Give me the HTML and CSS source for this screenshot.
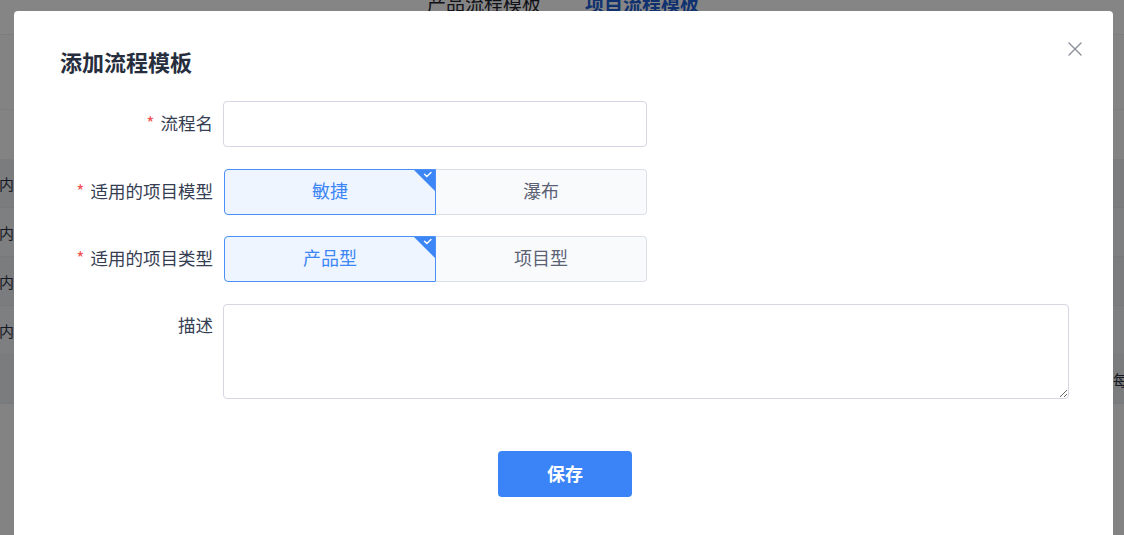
FILE: index.html
```html
<!DOCTYPE html>
<html lang="zh-CN">
<head>
<meta charset="utf-8">
<title>流程模板</title>
<link rel="stylesheet" href="styles.css">
</head>
<body>
  <div class="page">
    <div class="tabs">
      <span class="tab">产品流程模板</span>
      <span class="tab tab-active">项目流程模板</span>
    </div>
    <div class="toolbar"></div>
    <div class="table">
      <div class="row"><span class="cell">内容</span></div>
      <div class="row"><span class="cell">内容</span></div>
      <div class="row"><span class="cell">内容</span></div>
      <div class="row"><span class="cell">内容</span></div>
      <div class="row row-last"><span class="cell cell-right">每</span></div>
    </div>
  </div>

  <div class="mask"></div>

  <div class="dialog">
    <button class="dialog-close" type="button" aria-label="关闭">
      <svg viewBox="0 0 16 16" width="16" height="16"><path d="M2 2 L14 14 M14 2 L2 14" stroke="#8a8f9a" stroke-width="1.4" fill="none" stroke-linecap="round"/></svg>
    </button>
    <h2 class="dialog-title">添加流程模板</h2>

    <form class="form">
      <div class="form-row">
        <label class="form-label"><span class="req">*</span>流程名</label>
        <input class="input" type="text">
      </div>
      <div class="form-row">
        <label class="form-label"><span class="req">*</span>适用的项目模型</label>
        <div class="segmented">
          <span class="seg seg-on">敏捷
            <svg class="seg-mark" viewBox="0 0 23 23" width="23" height="23"><path d="M0 0 H23 V23 Z" fill="#3d86f6"/><path d="M11.5 5.2 L13.8 7.4 L18 3.4" stroke="#fff" stroke-width="1.4" fill="none" stroke-linecap="round" stroke-linejoin="round"/></svg>
          </span>
          <span class="seg">瀑布</span>
        </div>
      </div>
      <div class="form-row">
        <label class="form-label"><span class="req">*</span>适用的项目类型</label>
        <div class="segmented">
          <span class="seg seg-on">产品型
            <svg class="seg-mark" viewBox="0 0 23 23" width="23" height="23"><path d="M0 0 H23 V23 Z" fill="#3d86f6"/><path d="M11.5 5.2 L13.8 7.4 L18 3.4" stroke="#fff" stroke-width="1.4" fill="none" stroke-linecap="round" stroke-linejoin="round"/></svg>
          </span>
          <span class="seg">项目型</span>
        </div>
      </div>
      <div class="form-row form-row-top">
        <label class="form-label form-label-top">描述</label>
        <textarea class="textarea"></textarea>
      </div>
      <div class="form-actions">
        <button class="btn-primary" type="button">保存</button>
      </div>
    </form>
  </div>
</body>
</html>
```

FILE: styles.css
```css
* {
  box-sizing: border-box;
}

html, body {
  margin: 0;
  width: 1124px;
  height: 535px;
  overflow: hidden;
}

body {
  font-family: "Noto Sans CJK SC", "Noto Sans", sans-serif;
  background: #ffffff;
  color: #333a4c;
}

/* page behind the dialog */
.page {
  width: 1124px;
  height: 535px;
  background: #fbfbfc;
}

.tabs {
  height: 35px;
  display: flex;
  gap: 44px;
  padding-left: 427px;
  background: #ffffff;
  border-bottom: 1px solid #eceef2;
}

.tab {
  font-size: 19px;
  line-height: 24px;
  margin-top: -9px;
  color: #1f2430;
}

.tab-active {
  color: #1d5fd6;
  font-weight: 700;
}

.toolbar {
  height: 75px;
  border-bottom: 1px solid #eef0f3;
}

.table {
  padding-top: 49px;
}

.row {
  height: 49px;
  display: flex;
  align-items: center;
  border-bottom: 1px solid #e6e8ec;
  background: #f2f3f5;
}

.row:nth-child(odd) {
  background: #ecedf0;
}

.row-last {
  background: #ffffff;
  justify-content: flex-end;
  border-bottom: 1px solid #e6e8ec;
}

.cell {
  font-size: 15px;
  color: #2d3345;
  margin-left: -1px;
}

.cell-right {
  margin-right: -4px;
}

.mask {
  position: fixed;
  inset: 0;
  background: rgba(0, 0, 0, 0.48);
}

/* dialog */
.dialog {
  position: absolute;
  left: 14px;
  top: 11px;
  width: 1099px;
  height: 540px;
  background: #ffffff;
  border-radius: 4px;
  padding: 35px 44px 0 46px;
}

.dialog-close {
  position: absolute;
  left: 1053px;
  top: 30px;
  width: 16px;
  height: 16px;
  padding: 0;
  border: 0;
  background: none;
  display: flex;
}

.dialog-title {
  margin: 0;
  font-size: 22px;
  line-height: 30px;
  font-weight: 700;
  color: #262e3d;
}

.form {
  margin-top: 25px;
  display: flex;
  flex-direction: column;
  gap: 21.5px;
}

.form-row {
  display: flex;
  align-items: center;
  gap: 10px;
}

.form-row-top {
  align-items: flex-start;
}

.form-label {
  width: 153px;
  flex: none;
  text-align: right;
  font-size: 17.5px;
  line-height: 44px;
  padding-bottom: 2px;
  color: #363e53;
  white-space: nowrap;
}

.form-label-top {
  line-height: 42px;
}

.req {
  color: #f0504f;
  margin-right: 6px;
}

.input {
  width: 424px;
  height: 46px;
  border: 1px solid #d5d8e4;
  border-radius: 4px;
  background: #ffffff;
  font: inherit;
  padding: 0 12px;
}

.segmented {
  display: flex;
  width: 424px;
  height: 46px;
}

.seg {
  position: relative;
  flex: 1;
  display: flex;
  align-items: center;
  justify-content: center;
  padding-bottom: 4px;
  font-size: 18px;
  color: #5b6275;
  background: #f9fafc;
  border: 1px solid #dcdfe8;
  border-left: 0;
  border-radius: 0 4px 4px 0;
  overflow: hidden;
}

.seg-on {
  color: #3d86f6;
  background: #eef5ff;
  border: 1px solid #4b8ff7;
  border-radius: 4px 0 0 4px;
  margin-left: 1px;
}

.seg-mark {
  position: absolute;
  top: -1px;
  right: -1px;
}

.textarea {
  width: 846px;
  height: 95px;
  border: 1px solid #d5d8e4;
  border-radius: 4px;
  font: inherit;
  padding: 8px 12px;
  resize: vertical;
}

.form-actions {
  display: flex;
  justify-content: center;
  padding-top: 31px;
  margin-left: 1px;
}

.btn-primary {
  width: 134px;
  height: 46px;
  border: 0;
  border-radius: 4px;
  background: #3b84f7;
  color: #ffffff;
  font-family: inherit;
  font-size: 18px;
  font-weight: 700;
  padding-bottom: 3px;
}
```
